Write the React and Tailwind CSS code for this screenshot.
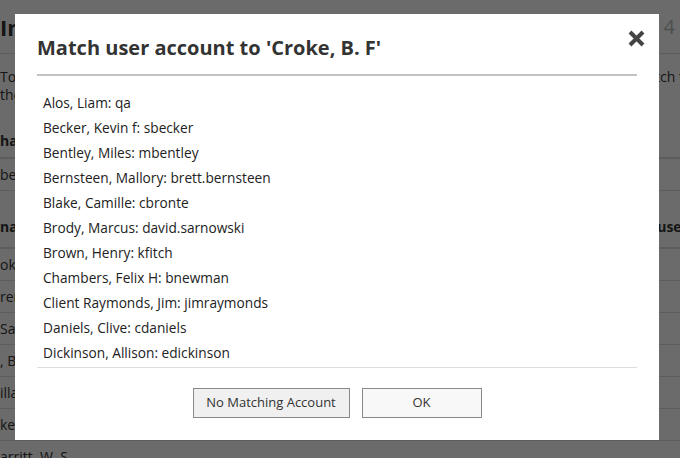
import React from 'react';

const accounts = [
  { name: 'Alos, Liam', user: 'qa' },
  { name: 'Becker, Kevin f', user: 'sbecker' },
  { name: 'Bentley, Miles', user: 'mbentley' },
  { name: 'Bernsteen, Mallory', user: 'brett.bernsteen' },
  { name: 'Blake, Camille', user: 'cbronte' },
  { name: 'Brody, Marcus', user: 'david.sarnowski' },
  { name: 'Brown, Henry', user: 'kfitch' },
  { name: 'Chambers, Felix H', user: 'bnewman' },
  { name: 'Client Raymonds, Jim', user: 'jimraymonds' },
  { name: 'Daniels, Clive', user: 'cdaniels' },
  { name: 'Dickinson, Allison', user: 'edickinson' },
];

const importedRows = ['oke', 'rer,', 'Sav', ', B', 'illa', 'ker', 'arritt, W. S.'];

const CloseIcon = () => (
  <svg width="19" height="19" viewBox="0 0 19 19" fill="none">
    <path d="M3 3L16 16M16 3L3 16" stroke="#444" strokeWidth="4" />
  </svg>
);

const BackgroundPage = () => (
  <div className="text-[14px] text-[#333]">
    <div className="flex items-center justify-between h-[54px] border-b border-[#ddd]">
      <span className="text-[22px] font-bold leading-[30px]">Im</span>
      <span className="text-[20px] text-[#bbb] leading-[28px] pr-[5px]">Step 3 of 4</span>
    </div>
    <div className="mt-[14px] leading-[18px]">
      <div className="flex justify-between">
        <span>To</span>
        <span className="-mr-[4px]">match t</span>
      </div>
      <div>the</div>
    </div>
    <div className="mt-[18px]">
      <div className="pt-[9px] pb-[6px] leading-[20px] font-bold border-b-2 border-[#ddd]">har</div>
      <div className="flex items-center h-[32px] border-b border-[#ddd]">be</div>
    </div>
    <div>
      <div className="flex justify-between pt-[26px] pb-[10px] leading-[20px] font-bold border-b-2 border-[#ddd]">
        <span>na</span>
        <span className="-mr-[8px]">Matched user</span>
      </div>
      {importedRows.map((row) => (
        <div key={row} className="flex items-center h-[32px] border-b border-[#ddd]">
          {row}
        </div>
      ))}
    </div>
  </div>
);

const App = () => {
  return (
    <div className="relative w-[680px] h-[458px] overflow-hidden bg-white font-['Open_Sans',sans-serif]">
      <BackgroundPage />
      <div className="absolute inset-0 bg-black/[0.58]" />

      <div className="absolute left-[15px] top-[14px] w-[644px] h-[426px] bg-white px-[22px] pt-[20px]">
        <button className="absolute right-[13px] top-[15px]">
          <CloseIcon />
        </button>
        <h2 className="text-[20px] leading-[28px] font-bold text-[#333]">
          Match user account to 'Croke, B. F'
        </h2>
        <div className="mt-[12px] h-[2px] bg-[#c3c3c3]" />
        <ul className="mt-[14px] pl-[6px] text-[13.7px] text-[#222]">
          {accounts.map((a) => (
            <li key={a.name} className="leading-[25px]">
              {a.name}: {a.user}
            </li>
          ))}
        </ul>
        <div className="mt-[2px] h-px bg-[#ddd]" />
        <div className="flex justify-center gap-[12px] mt-[20px]">
          <button className="w-[157px] h-[30px] border border-[#888] bg-[#f0f0f0] text-[13px] text-[#333]">
            No Matching Account
          </button>
          <button className="w-[120px] h-[30px] border border-[#888] bg-[#f8f8f8] text-[13px] text-[#333]">
            OK
          </button>
        </div>
      </div>
    </div>
  );
};

export default App;
